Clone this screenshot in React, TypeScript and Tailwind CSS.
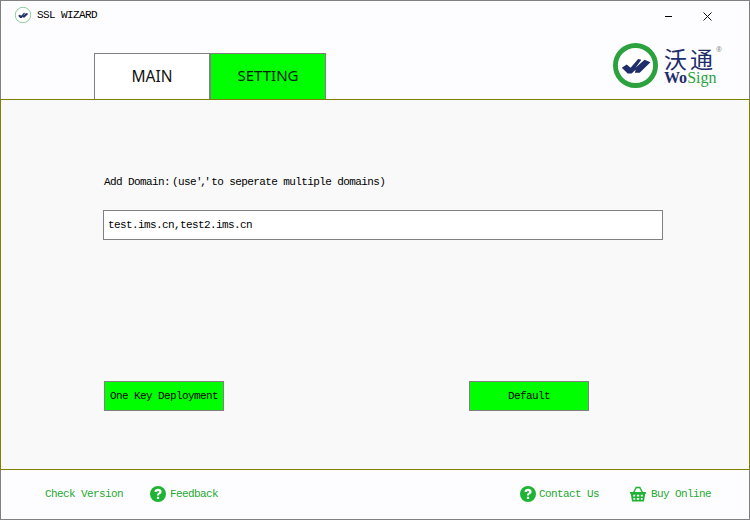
import { ReactNode } from "react";

const mono = "font-['Liberation_Mono','Noto_Sans_CJK_SC',monospace] text-[11px] tracking-[-0.6px]";

function LogoMark({ size, stroke }: { size: number; stroke: number }) {
  return (
    <svg width={size} height={size} viewBox="0 0 46 46" className="shrink-0">
      <circle cx="23" cy="23" r={23 - stroke / 2} fill="#fff" stroke="#2ba23d" strokeWidth={stroke} />
      <path
        d="M9 25.300L14 22l4 3.300 7.700-9L29 17l-6 8.300 9.300-8.300 6 2.700-11 10.600h-5l1-3.300-4.300 4.300H15z"
        fill="#1f2d6b"
      />
    </svg>
  );
}

function HelpIcon() {
  return (
    <svg width="16" height="16" viewBox="0 0 16 16" className="-mt-[2px] shrink-0">
      <circle cx="8" cy="8" r="8" fill="#1fb334" />
      <path d="M4.500 6C4.600 4 6.100 2.800 8.100 2.800c2 0 3.500 1.100 3.500 2.900 0 1.300-.8 1.900-1.600 2.400-.7.4-.9.700-.9 1.400H6.900c0-1.300.4-1.900 1.200-2.500.6-.4 1-.7 1-1.200 0-.6-.4-.9-1-.9-.7 0-1.100.4-1.200 1.100z" fill="#fff" />
      <rect x="6.900" y="10.800" width="2.200" height="2.100" fill="#fff" />
    </svg>
  );
}

function BasketIcon() {
  return (
    <svg width="16" height="16" viewBox="0 0 16 16" className="-mt-[2px] shrink-0">
      <path d="M3.500 6.500L6.500 1.200M12.500 6.500L9.500 1.200M5.500 1.500h5" stroke="#1fb334" strokeWidth="1.400" fill="none" />
      <path
        fillRule="evenodd"
        d="M0 6h16v1.800h-.8L14 15.500H2L.8 7.800H0zM3.200 8.800v1.700h2v-1.700zm3.600 0v1.700h2.400v-1.700zm4 0v1.700h2v-1.700zM3.400 12v1.800h1.800V12zm3.400 0v1.800h2.400V12zm4 0v1.800h1.800V12z"
        fill="#1fb334"
      />
    </svg>
  );
}

function FooterLink({ icon, gap, children }: { icon?: ReactNode; gap?: string; children: ReactNode }) {
  return (
    <div className={`flex items-center text-[#1fa82f] ${gap} ${mono}`}>
      {icon}
      <span>{children}</span>
    </div>
  );
}

export default function App() {
  return (
    <div className="flex h-[520px] w-[750px] flex-col border border-[#808080] bg-[#fdfdff] text-black">
      <header className="flex h-[98px] shrink-0 justify-between">
        <div className="flex flex-col justify-between">
          <div className={`flex items-center gap-[6px] pl-[14px] pt-[6px] ${mono}`}>
            <LogoMark size={16} stroke={1.500} />
            <span>SSL WIZARD</span>
          </div>
          <div className="flex pl-[93px] font-['Noto_Sans',sans-serif]">
            <div className="flex h-[46px] w-[116px] items-center justify-center border-x border-t border-[#808080] bg-white text-[15.500px] text-[#111]">
              MAIN
            </div>
            <div className="flex h-[46px] w-[116px] items-center justify-center border-x border-t border-[#808080] bg-[#00ff00] pb-[2px] text-[15px] text-[#021]">
              SETTING
            </div>
          </div>
        </div>
        <div className="flex w-[137px] flex-col">
          <div className="flex items-center gap-[31px] pl-[53px] pt-[11px]">
            <span className="h-px w-[7px] bg-black" />
            <svg width="9" height="9" viewBox="0 0 9 9">
              <path d="M.5.5l8 8M8.500.5l-8 8" stroke="#111" strokeWidth="1" />
            </svg>
          </div>
          <div className="flex items-start gap-[6px] pl-[1px] pt-[22px]">
            <LogoMark size={45} stroke={5} />
            <div className="flex flex-col pt-[2px]">
              <div className="flex items-start">
                <span className="font-['Noto_Sans_CJK_SC',sans-serif] text-[23px] leading-[26px] tracking-[3px] text-[#1f2d6b]">
                  沃通
                </span>
                <span className="text-[7px] leading-[10px] text-[#8a8a8a]">®</span>
              </div>
              <div className="font-['Liberation_Serif',serif] text-[16px] font-bold leading-[14px]">
                <span className="text-[#1f2d6b]">Wo</span>
                <span className="font-normal text-[#2ba23d]">Sign</span>
              </div>
            </div>
          </div>
        </div>
      </header>

      <main className="-mx-px flex h-[371px] shrink-0 flex-col border border-[#808000] bg-[#f9f9f9] pl-[102px] pr-[86px]">
        <p className={`pl-[1px] pt-[75px] leading-[14px] ${mono}`}>
          Add Domain:<span className="ml-[2px]">(use</span>
          <span className="tracking-[-2.500px]">','</span>
          <span className="ml-[3px]">to seperate multiple domains)</span>
        </p>
        <div className={`mt-[21px] flex h-[30px] items-center border border-[#808080] bg-white pl-[4px] ${mono}`}>
          test.ims.cn,test2.ims.cn
        </div>
        <div className="mt-[141px] flex justify-between pl-[1px] pr-[74px]">
          <button className={`h-[30px] w-[120px] border border-[#808080] bg-[#00ff00] pt-px ${mono}`}>One Key Deployment</button>
          <button className={`h-[30px] w-[120px] border border-[#808080] bg-[#00ff00] pt-px ${mono}`}>Default</button>
        </div>
      </main>

      <footer className="flex flex-1 items-center justify-between pl-[44px] pr-[38px]">
        <div className="flex items-center gap-[27px]">
          <FooterLink>Check Version</FooterLink>
          <FooterLink icon={<HelpIcon />} gap="gap-[4px]">Feedback</FooterLink>
        </div>
        <div className="flex items-center gap-[31px]">
          <FooterLink icon={<HelpIcon />} gap="gap-[3px]">Contact Us</FooterLink>
          <FooterLink icon={<BasketIcon />} gap="gap-[5px]">Buy Online</FooterLink>
        </div>
      </footer>
    </div>
  );
}
